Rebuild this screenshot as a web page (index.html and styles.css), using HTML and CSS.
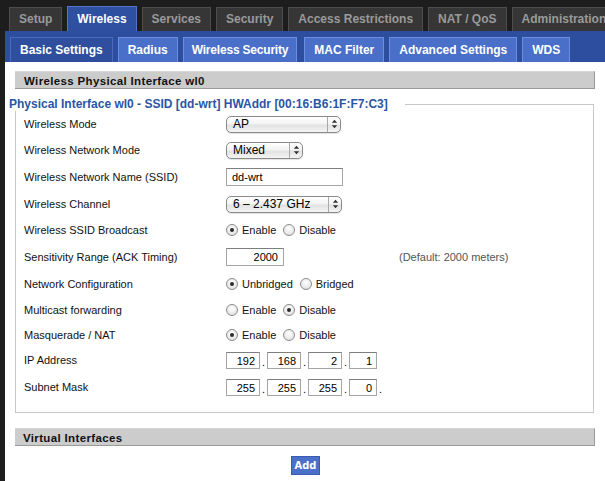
FILE: index.html
```html
<!DOCTYPE html>
<html>
<head>
<meta charset="utf-8">
<title>DD-WRT Wireless Basic Settings</title>
<link rel="stylesheet" href="styles.css">
</head>
<body>
<nav class="maintabs">
  <a class="tab">Setup</a>
  <a class="tab active">Wireless</a>
  <a class="tab">Services</a>
  <a class="tab">Security</a>
  <a class="tab">Access Restrictions</a>
  <a class="tab">NAT / QoS</a>
  <a class="tab">Administration</a>
</nav>
<div class="panel">
  <nav class="subtabs">
    <a class="subtab active">Basic Settings</a>
    <a class="subtab">Radius</a>
    <a class="subtab narrow">Wireless Security</a>
    <a class="subtab">MAC Filter</a>
    <a class="subtab">Advanced Settings</a>
    <a class="subtab">WDS</a>
  </nav>
  <main class="content">
    <h2 class="sect">Wireless Physical Interface wl0</h2>
    <fieldset class="phys">
      <legend>Physical Interface wl0 - SSID [dd-wrt] HWAddr [00:16:B6:1F:F7:C3]</legend>
      <div class="row">
        <span class="lbl">Wireless Mode</span>
        <div class="sel w-mode"><span class="val">AP</span><span class="arr"><svg width="7" height="10" viewBox="0 0 7 10"><path d="M3.5 0.8L6.2 3.8H0.8Z M0.8 6.2H6.2L3.5 9.2Z" fill="#333"/></svg></span></div>
      </div>
      <div class="row">
        <span class="lbl">Wireless Network Mode</span>
        <div class="sel w-net"><span class="val">Mixed</span><span class="arr"><svg width="7" height="10" viewBox="0 0 7 10"><path d="M3.5 0.8L6.2 3.8H0.8Z M0.8 6.2H6.2L3.5 9.2Z" fill="#333"/></svg></span></div>
      </div>
      <div class="row tall">
        <span class="lbl">Wireless Network Name (SSID)</span>
        <span class="txt w-ssid">dd-wrt</span>
      </div>
      <div class="row">
        <span class="lbl">Wireless Channel</span>
        <div class="sel w-chan"><span class="val">6 – 2.437 GHz</span><span class="arr"><svg width="7" height="10" viewBox="0 0 7 10"><path d="M3.5 0.8L6.2 3.8H0.8Z M0.8 6.2H6.2L3.5 9.2Z" fill="#333"/></svg></span></div>
      </div>
      <div class="row">
        <span class="lbl">Wireless SSID Broadcast</span>
        <span class="radio on"></span><span class="rl">Enable</span>
        <span class="radio"></span><span class="rl">Disable</span>
      </div>
      <div class="row tall">
        <span class="lbl">Sensitivity Range (ACK Timing)</span>
        <span class="txt num w-ack">2000</span>
        <span class="default">(Default: 2000 meters)</span>
      </div>
      <div class="row">
        <span class="lbl">Network Configuration</span>
        <span class="radio on"></span><span class="rl">Unbridged</span>
        <span class="radio"></span><span class="rl">Bridged</span>
      </div>
      <div class="row short">
        <span class="lbl">Multicast forwarding</span>
        <span class="radio"></span><span class="rl">Enable</span>
        <span class="radio on"></span><span class="rl">Disable</span>
      </div>
      <div class="row short">
        <span class="lbl">Masquerade / NAT</span>
        <span class="radio on"></span><span class="rl">Enable</span>
        <span class="radio"></span><span class="rl">Disable</span>
      </div>
      <div class="row">
        <span class="lbl">IP Address</span>
        <span class="txt num ip">192</span><span class="dot">.</span>
        <span class="txt num ip">168</span><span class="dot">.</span>
        <span class="txt num ip">2</span><span class="dot">.</span>
        <span class="txt num ip last">1</span>
      </div>
      <div class="row tall">
        <span class="lbl">Subnet Mask</span>
        <span class="txt num ip">255</span><span class="dot">.</span>
        <span class="txt num ip">255</span><span class="dot">.</span>
        <span class="txt num ip">255</span><span class="dot">.</span>
        <span class="txt num ip last">0</span><span class="dot">.</span>
      </div>
    </fieldset>
    <h2 class="sect virt">Virtual Interfaces</h2>
    <div class="actions"><button class="add">Add</button></div>
  </main>
</div>
</body>
</html>
```
FILE: styles.css
```css
* { box-sizing: border-box; }

html, body {
  margin: 0;
  width: 605px;
  height: 481px;
  overflow: hidden;
}

body {
  background: #1d1d1d;
  font-family: "Liberation Sans", Arial, sans-serif;
  font-size: 11px;
  color: #000;
}

/* main tabs */
.maintabs {
  display: flex;
  align-items: flex-end;
  gap: 5px;
  height: 31px;
  padding: 6px 0 0 9px;
  white-space: nowrap;
}

.tab {
  flex-shrink: 0;
  height: 24px;
  line-height: 23px;
  padding: 0 9px;
  background: #363636;
  border: 1px solid #4d4d4d;
  border-bottom: none;
  color: #9a9a9a;
  font-weight: bold;
  font-size: 12px;
}

.tab.active {
  height: 25px;
  line-height: 24px;
  background: #2f50a0;
  border-color: #5275c8;
  color: #fff;
}

/* panel */
.panel {
  margin-left: 5px;
  background: #fff;
  height: 450px;
}

.subtabs {
  display: flex;
  align-items: flex-end;
  gap: 5px;
  height: 31px;
  padding-left: 5px;
  background: #2d4e9e;
  white-space: nowrap;
}

.subtab {
  flex-shrink: 0;
  height: 25px;
  line-height: 24px;
  padding: 0 9px;
  background: #4a6fc9;
  border: 1px solid #6b8ee0;
  border-bottom: none;
  color: #fff;
  font-weight: bold;
  font-size: 12px;
}

.subtab.narrow {
  padding: 0 8px;
  margin-right: 2px;
  letter-spacing: -0.2px;
}

.subtab.active {
  background: #2f4f9e;
  border-color: #4a6bbd;
}

.content {
  padding: 9px 10px 0 10px;
}

.sect {
  margin: 0;
  height: 18px;
  line-height: 18px;
  padding-left: 9px;
  background: #cccccc;
  border-top: 1px solid #d6d6d6;
  border-right: 1px solid #9a9a9a;
  border-bottom: 1px solid #9a9a9a;
  font-size: 11.5px;
  font-weight: bold;
  letter-spacing: 0.35px;
  color: #111;
}

.sect.virt {
  margin-top: 15px;
  padding-left: 8px;
}

/* fieldset */
.phys {
  margin: 9px 1px 0 0;
  padding: 0 0 11px 8px;
  border: 1px solid #c8c8c8;
  min-width: 0;
}

.phys legend {
  margin-left: -15px;
  padding: 0 17px 0 0;
  color: #2a55a6;
  font-weight: bold;
  font-size: 12px;
  line-height: 13px;
}

.row {
  display: flex;
  align-items: center;
  height: 26px;
}

.row.tall { height: 28px; }
.row.short { height: 25px; }

.lbl {
  width: 202px;
  flex-shrink: 0;
  color: #111;
}

/* mac style select */
.sel {
  display: flex;
  height: 17px;
  border: 1px solid #8a8a8a;
  border-radius: 5px;
  background: linear-gradient(#ffffff, #f3f3f3 45%, #e2e2e2 55%, #f4f4f4);
  box-shadow: 0 1px 1px rgba(0, 0, 0, 0.12);
  overflow: hidden;
}

.sel .val {
  flex: 1;
  padding-left: 6px;
  line-height: 15px;
  font-size: 12px;
  color: #000;
}

.sel .arr {
  width: 13px;
  border-left: 1px solid #a9a9a9;
  display: flex;
  align-items: center;
  justify-content: center;
}

.w-mode { width: 115px; }
.w-net { width: 77px; }
.w-chan { width: 116px; }

/* text inputs */
.txt {
  display: block;
  height: 18px;
  line-height: 16px;
  padding: 0 5px;
  border: 1px solid #a5a5a5;
  border-top-color: #7e7e7e;
  background: #fff;
  font-size: 11px;
  color: #000;
}

.w-ssid { width: 117px; }
.w-ack { width: 58px; }

.num { text-align: right; }

.ip {
  width: 34px;
  height: 17px;
  padding: 0 4px;
}

.ip.last { width: 28px; }

.dot {
  width: 7px;
  text-align: center;
  padding-top: 4px;
}

.default {
  margin-left: 115px;
  color: #555;
}

/* radios */
.radio {
  width: 12px;
  height: 12px;
  flex-shrink: 0;
  border: 1px solid #8c8c8c;
  border-radius: 50%;
  background: radial-gradient(circle at 50% 35%, #ffffff, #e6e6e6 70%, #d2d2d2);
  display: flex;
  align-items: center;
  justify-content: center;
}

.radio.on::after {
  content: "";
  width: 4px;
  height: 4px;
  border-radius: 50%;
  background: #2b2b2b;
}

.rl {
  margin: 0 7px 0 4px;
  color: #111;
}

/* add button */
.actions {
  display: flex;
  justify-content: center;
  padding-top: 10px;
}

.add {
  height: 19px;
  padding: 0 3px;
  margin-left: 1px;
  background: #4b70c9;
  border: 1px solid #3a5cae;
  color: #fff;
  font-family: "DejaVu Sans Condensed", "Liberation Sans", sans-serif;
  font-stretch: condensed;
  font-weight: bold;
  font-size: 11px;
}
```
